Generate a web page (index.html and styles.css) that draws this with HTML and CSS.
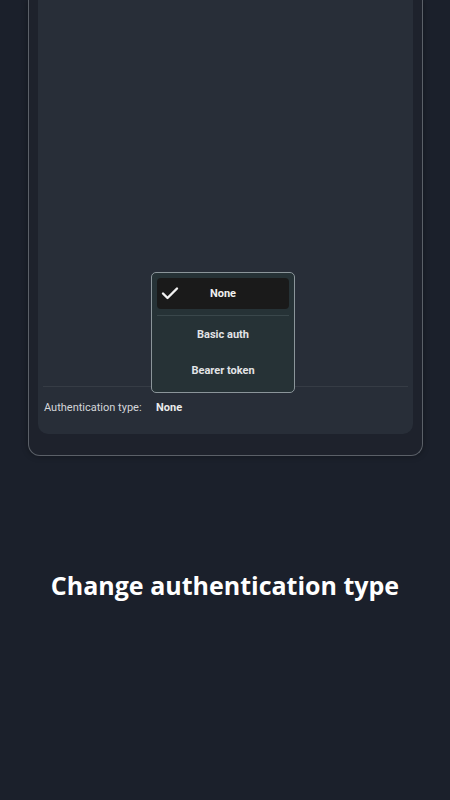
FILE: index.html
```html
<!DOCTYPE html>
<html lang="en">
<head>
    <meta charset="UTF-8">
    <meta name="viewport" content="width=device-width, initial-scale=1.0">
    <title>Change authentication type</title>
    <link rel="stylesheet" href="styles.css">
</head>
<body>
    <div class="phone">
        <div class="panel">
            <div class="panel-space"></div>
            <div class="auth-row">
                <span class="auth-label">Authentication type:</span>
                <span class="auth-value">None</span>
            </div>

            <div class="menu">
                <div class="menu-item selected">
                    <svg class="check" width="18" height="14" viewBox="0 0 18 14">
                        <path d="M2 7.5 L6.5 12 L16 2.5" fill="none" stroke="#f2f2f2" stroke-width="2.4" stroke-linecap="round" stroke-linejoin="round"/>
                    </svg>
                    <span>None</span>
                </div>
                <div class="menu-divider"></div>
                <div class="menu-item">Basic auth</div>
                <div class="menu-item">Bearer token</div>
            </div>
        </div>
    </div>

    <h1 class="caption">Change authentication type</h1>
</body>
</html>
```

FILE: styles.css
```css
body {
    margin: 0;
    background-color: #1b202b;
    font-family: Roboto, "Liberation Sans", sans-serif;
    color: #e6e6e6;
}

.phone {
    margin: 0 27px 0 28px;
    height: 456px;
    padding: 0 9px 21px;
    box-sizing: border-box;
    background-color: #1e222c;
    border: 1px solid #5b6068;
    border-top: none;
    border-radius: 0 0 12px 12px;
    box-shadow: 0 0 6px rgba(0, 0, 0, 0.35);
    display: flex;
}

.panel {
    position: relative;
    flex: 1;
    background-color: #282e38;
    border-radius: 0 0 10px 10px;
    display: flex;
    flex-direction: column;
    padding: 0 5px;
}

.panel-space {
    flex: 1;
}

.auth-row {
    border-top: 1px solid #363c45;
    height: 48px;
    padding: 14px 0 0 1px;
    box-sizing: border-box;
    font-size: 11px;
    display: flex;
}

.auth-label {
    color: #d4d6da;
    width: 112px;
}

.auth-value {
    font-weight: bold;
    color: #ececec;
}

.menu {
    position: absolute;
    left: 113px;
    top: 272px;
    width: 144px;
    height: 121px;
    box-sizing: border-box;
    background-color: #263236;
    border: 1px solid #8b959a;
    border-radius: 5px;
    padding: 5px;
}

.menu-item {
    height: 36px;
    display: flex;
    align-items: center;
    justify-content: center;
    font-size: 11px;
    font-weight: bold;
    color: #e2e4e6;
}

.menu-item.selected {
    position: relative;
    height: 31px;
    background-color: #1a1a1a;
    border-radius: 4px;
    color: #f0f0f0;
}

.check {
    position: absolute;
    left: 4px;
    top: 8px;
}

.menu-divider {
    height: 1px;
    background-color: #3a474b;
    margin: 6px 0 0;
}

.caption {
    margin: 112px 0 0;
    text-align: center;
    font-family: "Open Sans", sans-serif;
    font-size: 25px;
    font-weight: bold;
    color: #ffffff;
}
```
